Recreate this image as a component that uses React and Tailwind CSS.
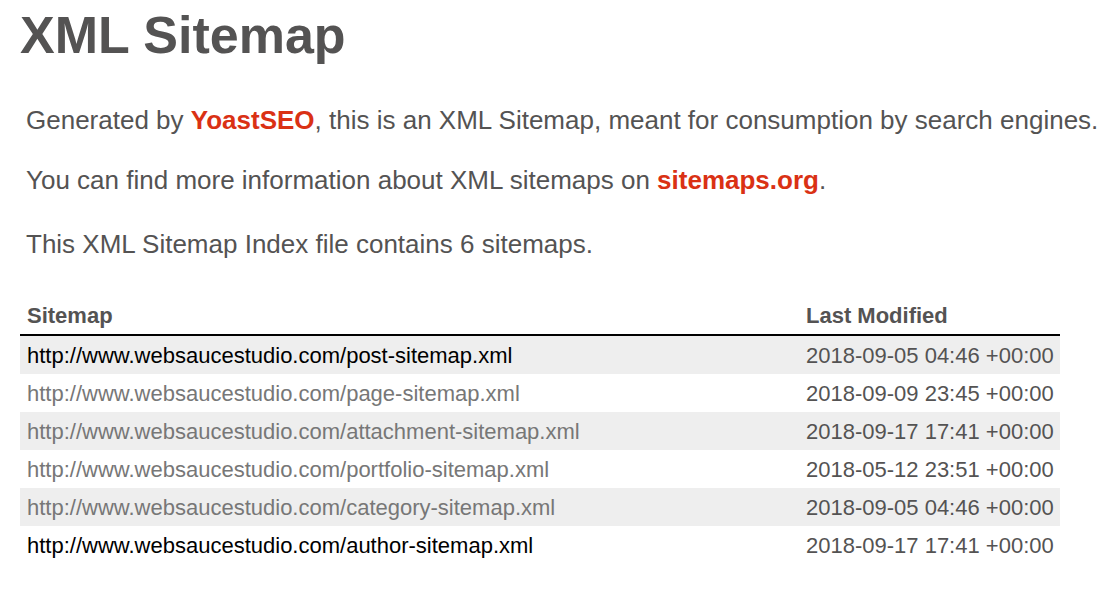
import React from "react";

const rows = [
  ["http://www.websaucestudio.com/post-sitemap.xml", "2018-09-05 04:46 +00:00", false],
  ["http://www.websaucestudio.com/page-sitemap.xml", "2018-09-09 23:45 +00:00", true],
  ["http://www.websaucestudio.com/attachment-sitemap.xml", "2018-09-17 17:41 +00:00", true],
  ["http://www.websaucestudio.com/portfolio-sitemap.xml", "2018-05-12 23:51 +00:00", true],
  ["http://www.websaucestudio.com/category-sitemap.xml", "2018-09-05 04:46 +00:00", true],
  ["http://www.websaucestudio.com/author-sitemap.xml", "2018-09-17 17:41 +00:00", false],
];

export default function App() {
  return (
    <div
      className="w-[1108px] h-[612px] bg-white text-[#545353] overflow-hidden"
      style={{ fontFamily: '"Liberation Sans", Arial, Helvetica, sans-serif' }}
    >
      <div className="pl-[20px] pt-[7px]">
        <h1 className="text-[52px] font-bold leading-[56px] text-[#545353]">XML Sitemap</h1>
        <div className="pl-[6px] text-[26px] leading-[28px]">
          <p className="mt-[43px]">
            Generated by <a className="text-[#da3114] font-bold">YoastSEO</a>, this is an XML Sitemap, meant for consumption by search engines.
          </p>
          <p className="mt-[32px]">
            You can find more information about XML sitemaps on <a className="text-[#da3114] font-bold">sitemaps.org</a>.
          </p>
          <p className="mt-[36px]">This XML Sitemap Index file contains 6 sitemaps.</p>
        </div>
        <div className="mt-[38px] w-[1040px] text-[22px]">
          <div className="grid grid-cols-[780px_260px] h-[40px] border-b-2 border-black font-bold items-center">
            <div className="pl-[7px]">Sitemap</div>
            <div className="pl-[6px]">Last Modified</div>
          </div>
          {rows.map(([url, date, visited], i) => (
            <div
              key={i}
              className={`grid grid-cols-[780px_260px] h-[38px] items-center ${i % 2 === 0 ? "bg-[#eeeeee]" : "bg-white"}`}
            >
              <div className={`pl-[7px] ${visited ? "text-[#777777]" : "text-black"}`}>{url}</div>
              <div className="pl-[6px]">{date}</div>
            </div>
          ))}
        </div>
      </div>
    </div>
  );
}
